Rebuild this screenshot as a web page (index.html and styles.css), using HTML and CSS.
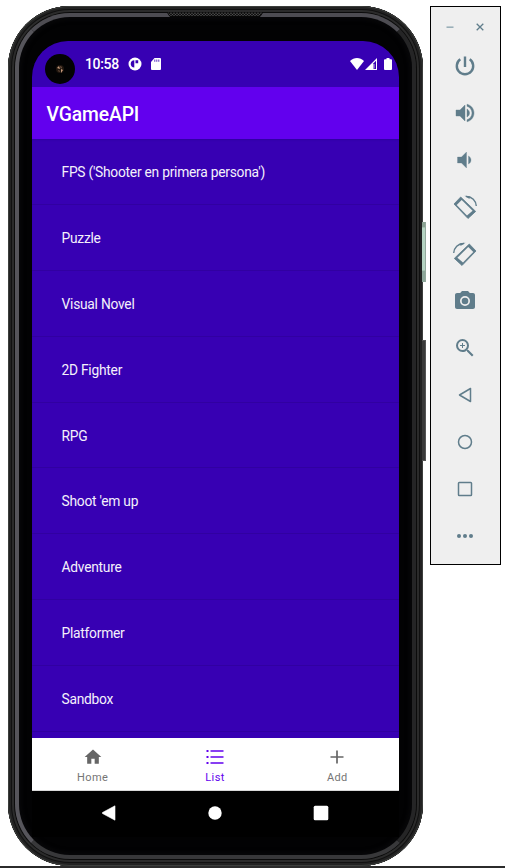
FILE: index.html
```html
<!DOCTYPE html>
<html lang="en">
<head>
<meta charset="utf-8">
<title>VGameAPI</title>
<link rel="stylesheet" href="styles.css">
</head>
<body>
<div class="desktop">
  <div class="phone">
    <span class="side-key power-key"></span>
    <span class="side-key volume-key"></span>
    <div class="frame">
      <div class="bezel">
        <svg class="speaker" width="96" height="6" viewBox="0 0 96 6">
          <defs><pattern id="mesh" width="3" height="3" patternUnits="userSpaceOnUse"><rect width="3" height="3" fill="#111"/><circle cx="1" cy="1" r=".8" fill="#666"/><circle cx="2.5" cy="2.5" r=".6" fill="#555"/></pattern></defs>
          <path d="M0 0H96L93 4.5H3Z" fill="url(#mesh)" stroke="#080808"/>
        </svg>
        <div class="screen">
          <header class="status">
            <span class="camera"><svg width="10" height="10" viewBox="0 0 10 10"><circle cx="5" cy="5" r="4" fill="#21170f"/><path d="M2 4l2-2 1 3zM6 5l2 1-2 3z" fill="#c79b7d"/><path d="M5 2l2 1-1 2zM3 6l2 1-1 1z" fill="#7b5a49"/></svg></span>
            <span class="clock">10:58</span>
            <svg class="st-app" width="14" height="14" viewBox="0 0 14 14"><circle cx="7" cy="7" r="6.5" fill="#fff"/><path d="M6.300 3.200C4 3.300 2.700 4.800 2.700 6.900c0 1.900 1.400 3.500 3.600 3.700zM7.500 3.200h2.700v3H7.500z" fill="#3700b3"/></svg>
            <svg class="st-sd" width="10" height="12" viewBox="0 0 10 12"><path d="M3.5 0H9q1 0 1 1v10q0 1-1 1H1q-1 0-1-1V4z" fill="#fff"/><path d="M3.8 1.5v2.3M5.8 1.5v2.3M7.8 1.5v2.3" stroke="#3700b3" stroke-width=".8"/></svg>
            <span class="grow"></span>
            <svg width="14" height="12" viewBox="0 0 14 12"><path d="M7 12L0 3.1C4-.9 10-.9 14 3.1z" fill="#fff"/></svg>
            <svg class="st-cell" width="12" height="12" viewBox="0 0 12 12"><path d="M0 12L12 0v12z" fill="#fff"/><path d="M8.5 11V5.3L11 2.8V11z" fill="#3700b3"/><path d="M9.2 10.5V6" stroke="#fff" stroke-width=".5"/></svg>
            <svg class="st-batt" width="8" height="12" viewBox="0 0 8 12"><path d="M2.5 0h3v1.2H7q1 0 1 1V11q0 1-1 1H1q-1 0-1-1V2.200q0-1 1-1h1.500z" fill="#fff"/></svg>
          </header>
          <div class="appbar">VGameAPI</div>
          <ul class="list">
            <li>FPS ('Shooter en primera persona')</li>
            <li>Puzzle</li>
            <li>Visual Novel</li>
            <li>2D Fighter</li>
            <li>RPG</li>
            <li>Shoot 'em up</li>
            <li>Adventure</li>
            <li>Platformer</li>
            <li>Sandbox</li>
          </ul>
          <nav class="tabs">
            <div class="tab">
              <svg width="20" height="20" viewBox="0 0 24 24"><path d="M10 20v-6h4v6h5v-8h3L12 3 2 12h3v8z" fill="#666"/></svg>
              <span>Home</span>
            </div>
            <div class="tab active">
              <svg width="20" height="20" viewBox="0 0 20 20"><path d="M5.500 4H18.500M5.500 10H18.500M5.500 16H18.500" stroke="#6200ee" stroke-width="1.700"/><path d="M1.500 4h2M1.500 10h2M1.500 16h2" stroke="#6200ee" stroke-width="2.200"/></svg>
              <span>List</span>
            </div>
            <div class="tab">
              <svg width="20" height="20" viewBox="0 0 20 20"><path d="M10 3.500V16.500M3.500 10H16.500" stroke="#666" stroke-width="1.700"/></svg>
              <span>Add</span>
            </div>
          </nav>
          <div class="sysnav">
            <svg width="16" height="16" viewBox="0 0 16 16"><path d="M14 .8V15.200L1.500 8.500Q.8 8 1.500 7.500z" fill="#fff" stroke="#fff" stroke-width=".6"/></svg>
            <svg width="16" height="16" viewBox="0 0 16 16"><circle cx="8" cy="8" r="6.700" fill="#fff"/></svg>
            <svg width="16" height="16" viewBox="0 0 16 16"><rect x=".7" y=".7" width="14.600" height="14.600" rx="1.500" fill="#fff"/></svg>
          </div>
        </div>
      </div>
    </div>
  </div>
  <aside class="tools">
    <div class="window-keys">
      <svg width="10" height="10" viewBox="0 0 10 10"><path d="M1.500 5.200h7" stroke="#9aafb8" stroke-width="1.600"/></svg>
      <svg width="10" height="10" viewBox="0 0 10 10"><path d="M1.700 1.700l6.600 6.600M8.300 1.700L1.700 8.300" stroke="#607d8b" stroke-width="1.300"/></svg>
    </div>
    <svg viewBox="0 0 24 24"><path d="M12 2.500v10.500M7.300 5.300A8.200 8.200 0 1 0 16.700 5.300" fill="none" stroke="#607d8b" stroke-width="2.400"/></svg>
    <svg viewBox="0 0 24 24"><path d="M3 9v6h4l5 5V4L7 9zM16.500 12c0-1.770-1.020-3.290-2.500-4.030v8.050c1.480-.73 2.500-2.250 2.500-4.020zM14 3.230v2.060c2.890.86 5 3.540 5 6.710s-2.110 5.850-5 6.710v2.060c4.010-.91 7-4.490 7-8.770s-2.990-7.860-7-8.770z" fill="#607d8b" stroke="#607d8b" stroke-width=".4"/></svg>
    <svg viewBox="0 0 24 24"><path d="M4.500 9v6h4l5 5V4l-5 5zM15.500 7.970v8.050c1.480-.73 2.500-2.250 2.500-4.020s-1.020-3.290-2.500-4.050z" fill="#607d8b" stroke="#607d8b" stroke-width=".3"/></svg>
    <svg viewBox="0 0 24 24"><g id="turn"><path d="M7.700 2L22.700 16.400 15 23.500 1 9z" fill="#607d8b" stroke="#607d8b" stroke-width=".8" stroke-linejoin="round"/><path d="M8.700 5.100L19.600 15.700 14 20.600 3.700 9.900z" fill="#efefef"/><path d="M13 1.500C19 1.200 23 6 23.300 11" fill="none" stroke="#607d8b" stroke-width="1.400"/><path d="M11.500.7l5 3.200.3-2.700z" fill="#607d8b"/></g></svg>
    <svg viewBox="0 0 24 24"><use href="#turn" transform="translate(24 0) scale(-1 1)"/></svg>
    <svg viewBox="0 0 24 24"><path fill-rule="evenodd" d="M9 2L7.170 4H4c-1.100 0-2 .9-2 2v12c0 1.100.9 2 2 2h16c1.100 0 2-.9 2-2V6c0-1.100-.9-2-2-2h-3.170L15 2zM12 17a5 5 0 1 1 0-10 5 5 0 0 1 0 10zM12 15.300a3.300 3.300 0 1 0 0-6.600 3.300 3.300 0 0 0 0 6.600z" fill="#607d8b"/></svg>
    <svg viewBox="0 0 24 24"><path d="M15.500 14h-.79l-.28-.27A6.470 6.470 0 0 0 16 9.500 6.500 6.500 0 1 0 9.500 16c1.610 0 3.090-.59 4.230-1.570l.27.28v.79l5 4.990L20.490 19zm-6 0C7.010 14 5 11.990 5 9.500S7.010 5 9.500 5 14 7.010 14 9.500 11.990 14 9.500 14zM12 10h-2v2H9v-2H7V9h2V7h1v2h2z" fill="#607d8b"/></svg>
    <svg viewBox="0 0 24 24"><path d="M17.500 5.500v13L6.500 12z" fill="none" stroke="#607d8b" stroke-width="1.500" stroke-linejoin="round"/></svg>
    <svg viewBox="0 0 24 24"><circle cx="12" cy="12" r="6.500" fill="none" stroke="#607d8b" stroke-width="1.500"/></svg>
    <svg viewBox="0 0 24 24"><rect x="5.500" y="5.500" width="13" height="13" rx=".8" fill="none" stroke="#607d8b" stroke-width="1.500"/></svg>
    <svg viewBox="0 0 24 24"><g fill="#607d8b"><circle cx="6" cy="12" r="2"/><circle cx="12" cy="12" r="2"/><circle cx="18" cy="12" r="2"/></g></svg>
  </aside>
</div>
<div class="ground"></div>
</body>
</html>
```
FILE: styles.css
```css
* { box-sizing: border-box; }
body {
  margin: 0;
  width: 505px;
  height: 868px;
  overflow: hidden;
  background: #fff;
  font-family: Roboto, "Liberation Sans", sans-serif;
}
svg { display: block; flex: none; }
.desktop {
  display: flex;
  align-items: flex-start;
  height: 866px;
  padding: 6px 4px 0 8px;
}
.phone {
  position: relative;
  width: 415px;
  height: 860px;
  flex: none;
}
.frame {
  width: 415px;
  height: 860px;
  padding: 7px;
  border-radius: 62px;
  background: #1c1c1c;
  box-shadow: inset 0 0 0 1px #3c3e3c, inset 0 0 0 3px #222, inset 0 0 0 4px #111, inset 0 0 0 6px #2b2b2b, inset 0 0 0 7px #0b0b0b;
}
.bezel {
  height: 846px;
  padding: 24px 8px 0 13px;
  border: 4px solid;
  border-color: #4d4c52 #252526 #38383a #56555b;
  border-radius: 55px;
  background: #020203;
  box-shadow: inset 0 0 5px 2px #09090b;
}
.speaker {
  position: absolute;
  top: 6px;
  left: 159px;
}
.side-key {
  position: absolute;
  left: 414px;
  width: 4px;
}
.power-key {
  top: 216px;
  height: 60px;
  background: linear-gradient(#8ba293 0 8%, #b5d3c2 10% 80%, #8da69a 82%);
  border-right: 1px solid #94a99d;
}
.volume-key {
  top: 334px;
  height: 121px;
  background: #393939;
  border: solid #555;
  border-width: 1px 1px 1px 0;
}
.screen {
  width: 367px;
  height: 796px;
  overflow: hidden;
  border-radius: 36px 36px 0 0;
  background: #000;
}
.status {
  display: flex;
  align-items: center;
  height: 46px;
  padding: 0 7px 0 13px;
  background: #3700b3;
  color: #fff;
}
.camera {
  display: flex;
  align-items: center;
  justify-content: center;
  width: 30px;
  height: 30px;
  margin-top: 10px;
  border-radius: 50%;
  background: #030303;
}
.clock {
  width: 34px;
  margin-left: 10px;
  font-size: 14px;
  font-weight: 500;
  letter-spacing: -.35px;
  line-height: 16px;
}
.st-app { margin-left: 9px; }
.st-sd { margin-left: 9px; }
.grow { flex: 1; }
.st-cell { margin-left: 1px; }
.st-batt { margin-left: 7px; }
.appbar {
  height: 52px;
  padding-left: 14.5px;
  background: #6200ee;
  color: #fff;
  font-size: 19.3px;
  font-weight: 500;
  letter-spacing: -.1px;
  line-height: 55px;
}
.list {
  height: 599px;
  margin: 0;
  padding: 0;
  list-style: none;
  background: #3700b3;
  box-shadow: inset 0 2px 2px -1px #3000a0;
}
.list li {
  height: 65.9px;
  padding-left: 29.5px;
  border-bottom: 1px solid #3100a1;
  color: #f4f0fb;
  font-size: 13.8px;
  letter-spacing: -.25px;
  line-height: 67px;
}
.tabs {
  display: flex;
  height: 53px;
  background: #fff;
  border-bottom: 1px solid #d8d8d8;
}
.tab {
  display: flex;
  flex: 1;
  flex-direction: column;
  align-items: center;
  padding: 9px 1px 0 0;
  color: #757575;
  font-size: 11px;
  letter-spacing: .4px;
  line-height: 14px;
}
.tab span { margin-top: 4px; }
.active { color: #6200ee; }
.sysnav {
  display: flex;
  align-items: center;
  justify-content: space-between;
  height: 44px;
  padding: 0 70px 0 69px;
}
.tools {
  display: flex;
  flex-direction: column;
  align-items: center;
  width: 71px;
  height: 559px;
  margin-left: 7px;
  padding-right: 1px;
  border: 1px solid #000;
  background: #efefef;
  flex: none;
}
.tools > svg {
  width: 24px;
  height: 24px;
  margin-bottom: 23px;
}
.window-keys {
  display: flex;
  gap: 20px;
  height: 10px;
  margin: 15px 0 22px;
}
.ground {
  height: 2px;
  background: #2b2b2b;
}
```
